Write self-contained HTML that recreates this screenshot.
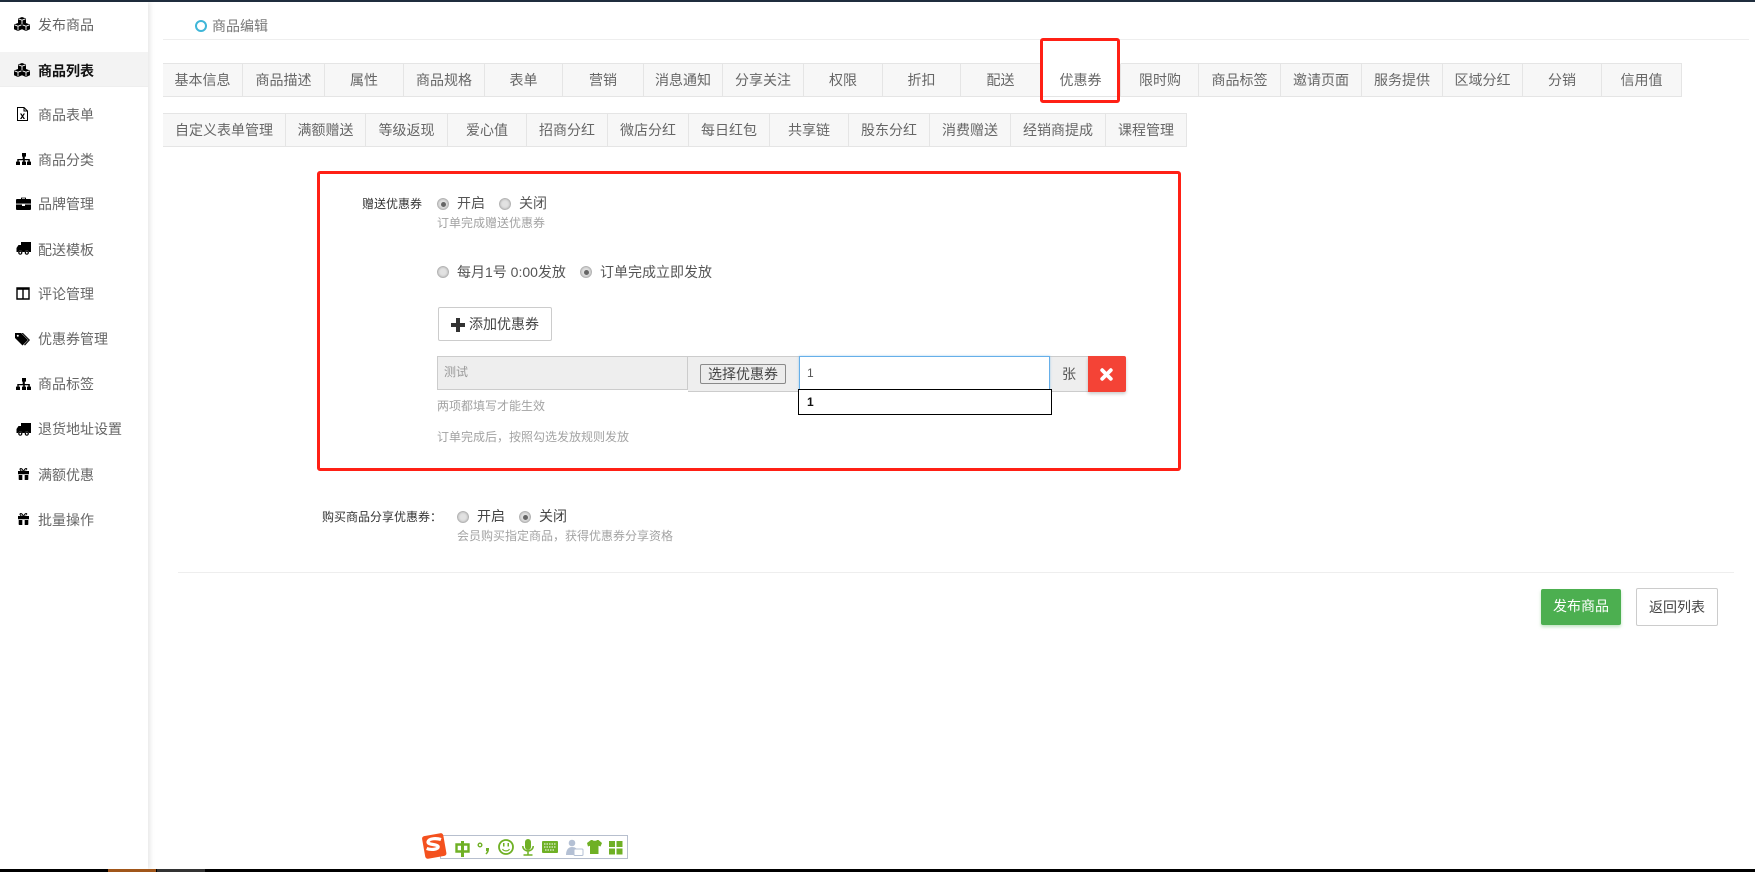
<!DOCTYPE html>
<html lang="zh-CN"><head><meta charset="utf-8"><title>商品编辑</title>
<style>
html,body{margin:0;padding:0;background:#fff;width:1755px;height:872px;overflow:hidden}
body{position:relative;font-family:"Liberation Sans","Noto Sans CJK SC",sans-serif;font-size:14px;color:#555}
.a,.t,.tab{position:absolute;box-sizing:border-box}
.t{white-space:nowrap;line-height:20px;height:20px}
.s{font-size:12px}.g{color:#a3a3a3}.d{color:#333}
.n{left:38px;color:#666}
.tab{height:34px;background:#f7f7f7;border:1px solid #e5e5e5;border-left:0;text-align:center;line-height:33px;color:#666}
.r{position:absolute;width:12px;height:12px;border-radius:50%;background:#e2e2e2;border:1px solid #b5b5b5;box-sizing:border-box;box-shadow:inset 0 0 2px #aaa}
.r.c:after{content:"";position:absolute;left:2.5px;top:2.5px;width:5px;height:5px;border-radius:50%;background:#666}
svg.i{position:absolute;overflow:visible}
</style></head><body>
<svg width="0" height="0" style="position:absolute"><defs>
<g id="cube"><path d="M4 0l4 1.500v4.800L4 8 0 6.300V1.500z" fill="#000"/><path d="M.6 1.900L4 3.200l3.400-1.300M4 3.200v4" stroke="#fff" stroke-width=".9" fill="none"/></g>
<g id="cubes"><use href="#cube" x="4"/><use href="#cube" y="6"/><use href="#cube" x="8" y="6"/></g>
<g id="sitemap"><path d="M5.500 0h4v3.600h-1.200v2.400h5v2.600h1.200V12h-4V8.600h1.300V7.200H8.300v1.400h1.200V12h-4V8.600h1.200V7.200H2.200v1.400h1.300V12h-4V8.600h1.300V6h5.400V3.600H5.500z" transform="translate(.5)" fill="#000"/></g>
<g id="brief"><path d="M5 2V.6h5V2H14a1 1 0 0 1 1 1v3.600H0V3a1 1 0 0 1 1-1zM6 2h3V1.400H6zM0 7.500h6V9h3V7.500h6V12a1 1 0 0 1-1 1H1a1 1 0 0 1-1-1z" fill="#000"/></g>
<g id="truck"><path d="M5 0h10v10h-2.200a2.100 2.100 0 0 0-4 0H6.300a2.100 2.100 0 0 0-4 0H.5V6l2-3H5z" fill="#000"/><circle cx="4.300" cy="10.700" r="1.500" fill="#fff" stroke="#000" stroke-width="1.200"/><circle cx="10.800" cy="10.700" r="1.500" fill="#fff" stroke="#000" stroke-width="1.200"/></g>
<g id="gift"><path d="M3.500 3C1.500 1 3 0 4 0c1 0 2 1.200 2.500 2.500C7 1.200 8 0 9 0c1 0 2.500 1-.5 3H12v3.200H1V3zM4 1.300c-.7 0-.5 1 .6 1.500h1C5.300 2 4.700 1.300 4 1.300zM9 1.300c-.7 0-1.300.7-1.600 1.500h1C9.500 2.300 9.700 1.300 9 1.300zM1.700 7H5.300v5H2.500a.8.8 0 0 1-.8-.8zM7.700 7h3.600v4.200a.8.8 0 0 1-.8.8H7.700z" fill="#000"/></g>
</defs></svg>

<div class="a" style="left:0;top:0;width:1755px;height:2px;background:#1f2d3d"></div>

<div class="a" style="left:0;top:2px;width:148px;height:867px;background:#fff;box-shadow:2px 0 5px rgba(0,0,0,.1)"></div>
<div class="a" style="left:0;top:52px;width:148px;height:35px;background:#f3f3f3;border-bottom:1px solid #eee"></div>

<svg class="i" style="left:14px;top:17px" width="16" height="14"><use href="#cubes"/></svg>
<svg class="i" style="left:14px;top:63px" width="16" height="14"><use href="#cubes"/></svg>
<svg class="i" style="left:17px;top:107px" width="11" height="14"><path d="M.5.500h6.500l3.500 3.500v9.500H.5z" fill="#fff" stroke="#000"/><path d="M7 .5v3.500h3.500" fill="none" stroke="#000"/><path d="M3 6.500h1.500l1 1.700 1-1.700H8L6.200 9.200 8 12H6.500l-1-1.800-1 1.800H3l1.800-2.800z" fill="#000"/></svg>
<svg class="i" style="left:16px;top:153px" width="15" height="12"><use href="#sitemap"/></svg>
<svg class="i" style="left:16px;top:197px" width="15" height="13"><use href="#brief"/></svg>
<svg class="i" style="left:16px;top:242px" width="15" height="13"><use href="#truck"/></svg>
<svg class="i" style="left:16px;top:287px" width="14" height="13"><path d="M1 1h12v11H1zM7 1v11" fill="none" stroke="#000" stroke-width="1.400"/><path d="M1 1h12v1.800H1z" fill="#000"/></svg>
<svg class="i" style="left:15px;top:333px" width="16" height="13"><path d="M0 0h6l7 7-5.500 5.500L0 5z" fill="#000"/><path d="M8 0l7 7-5 5.500-1-.8L13.500 7 6.500 0z" fill="#000"/><circle cx="2.800" cy="2.800" r="1" fill="#fff"/></svg>
<svg class="i" style="left:16px;top:378px" width="15" height="12"><use href="#sitemap"/></svg>
<svg class="i" style="left:16px;top:423px" width="15" height="13"><use href="#truck"/></svg>
<svg class="i" style="left:16.500px;top:468px" width="13" height="12"><use href="#gift"/></svg>
<svg class="i" style="left:16.500px;top:513px" width="13" height="12"><use href="#gift"/></svg>

<span class="t n" style="top:15px">发布商品</span>
<span class="t n" style="top:61px;color:#111;font-weight:700">商品列表</span>
<span class="t n" style="top:105px">商品表单</span>
<span class="t n" style="top:150px">商品分类</span>
<span class="t n" style="top:194px">品牌管理</span>
<span class="t n" style="top:240px">配送模板</span>
<span class="t n" style="top:284px">评论管理</span>
<span class="t n" style="top:329px">优惠券管理</span>
<span class="t n" style="top:374px">商品标签</span>
<span class="t n" style="top:419px">退货地址设置</span>
<span class="t n" style="top:465px">满额优惠</span>
<span class="t n" style="top:510px">批量操作</span>

<div class="a" style="left:195px;top:20px;width:12px;height:12px;border:2px solid #3fb6d8;border-radius:50%"></div>
<span class="t" style="left:212px;top:16px;color:#777">商品编辑</span>
<div class="a" style="left:163px;top:39px;width:1586px;height:1px;background:#eee"></div>

<div class="tab" style="left:163px;top:63px;width:80px">基本信息</div>
<div class="tab" style="left:243px;top:63px;width:82px">商品描述</div>
<div class="tab" style="left:325px;top:63px;width:79px">属性</div>
<div class="tab" style="left:404px;top:63px;width:81px">商品规格</div>
<div class="tab" style="left:485px;top:63px;width:78px">表单</div>
<div class="tab" style="left:563px;top:63px;width:81px">营销</div>
<div class="tab" style="left:644px;top:63px;width:79px">消息通知</div>
<div class="tab" style="left:723px;top:63px;width:81px">分享关注</div>
<div class="tab" style="left:804px;top:63px;width:79px">权限</div>
<div class="tab" style="left:883px;top:63px;width:78px">折扣</div>
<div class="tab" style="left:961px;top:63px;width:80px">配送</div>
<div class="tab" style="left:1041px;top:63px;width:80px;background:#fff;border-top-color:transparent">优惠券</div>
<div class="tab" style="left:1121px;top:63px;width:78px;padding-left:1px">限时购</div>
<div class="tab" style="left:1199px;top:63px;width:82px">商品标签</div>
<div class="tab" style="left:1281px;top:63px;width:81px">邀请页面</div>
<div class="tab" style="left:1362px;top:63px;width:81px">服务提供</div>
<div class="tab" style="left:1443px;top:63px;width:80px">区域分红</div>
<div class="tab" style="left:1523px;top:63px;width:79px">分销</div>
<div class="tab" style="left:1602px;top:63px;width:80px">信用值</div>

<div class="tab" style="left:163px;top:113px;width:123px">自定义表单管理</div>
<div class="tab" style="left:286px;top:113px;width:80px">满额赠送</div>
<div class="tab" style="left:366px;top:113px;width:82px">等级返现</div>
<div class="tab" style="left:448px;top:113px;width:79px">爱心值</div>
<div class="tab" style="left:527px;top:113px;width:81px">招商分红</div>
<div class="tab" style="left:608px;top:113px;width:81px">微店分红</div>
<div class="tab" style="left:689px;top:113px;width:81px">每日红包</div>
<div class="tab" style="left:770px;top:113px;width:79px">共享链</div>
<div class="tab" style="left:849px;top:113px;width:81px">股东分红</div>
<div class="tab" style="left:930px;top:113px;width:81px">消费赠送</div>
<div class="tab" style="left:1011px;top:113px;width:95px">经销商提成</div>
<div class="tab" style="left:1106px;top:113px;width:81px">课程管理</div>

<div class="a" style="left:1040px;top:38px;width:80px;height:65px;border:3px solid #ff2015;border-radius:3px"></div>
<div class="a" style="left:317px;top:171px;width:864px;height:300px;border:3px solid #ff2015;border-radius:3px"></div>

<span class="t s d" style="left:362px;top:194px">赠送优惠券</span>
<i class="r c" style="left:437px;top:198px"></i><span class="t" style="left:457px;top:193px">开启</span>
<i class="r" style="left:499px;top:198px"></i><span class="t" style="left:519px;top:193px">关闭</span>
<span class="t s g" style="left:437px;top:213px">订单完成赠送优惠券</span>

<i class="r" style="left:437px;top:266px"></i><span class="t" style="left:457px;top:262px">每月1号 0:00发放</span>
<i class="r c" style="left:580px;top:266px"></i><span class="t" style="left:600px;top:262px">订单完成立即发放</span>

<div class="a" style="left:438px;top:307px;width:114px;height:34px;border:1px solid #ccc;border-radius:2px;background:#fff"></div>
<svg class="i" style="left:451px;top:318px" width="14" height="14"><path d="M5 0h4v5h5v4H9v5H5V9H0V5h5z" fill="#333"/></svg>
<span class="t" style="left:469px;top:314px;color:#444">添加优惠券</span>

<div class="a" style="left:437px;top:356px;width:251px;height:34px;background:#eee;border:1px solid #ccc"></div>
<span class="t s" style="left:444px;top:362px;color:#999">测试</span>
<div class="a" style="left:688px;top:356px;width:111px;height:36px;background:#eee;border-top:1px solid #ccc;border-bottom:1px solid #ccc"></div>
<div class="a" style="left:700px;top:364px;width:86px;height:20px;background:#ececec;border:1px solid #8a8a8a;border-radius:2px"></div>
<span class="t" style="left:708px;top:364px;color:#444">选择优惠券</span>
<div class="a" style="left:1050px;top:356px;width:38px;height:36px;background:#eee;border-top:1px solid #ccc;border-bottom:1px solid #ccc"></div>
<span class="t" style="left:1062px;top:364px;color:#555">张</span>
<div class="a" style="left:799px;top:356px;width:251px;height:35px;background:#fff;border:1px solid #66afe9;box-shadow:0 0 2px rgba(102,175,233,.6)"></div>
<span class="t" style="left:807px;top:363px;color:#555;font-size:12px">1</span>
<div class="a" style="left:798px;top:389px;width:254px;height:26px;background:#fff;border:1px solid #000"></div>
<span class="t s" style="left:807px;top:392px;color:#111;font-weight:700">1</span>
<div class="a" style="left:1088px;top:356px;width:38px;height:36px;background:#f44336;border-radius:0 2px 2px 0;box-shadow:0 2px 3px rgba(0,0,0,.2)"></div>
<svg class="i" style="left:1100px;top:368px" width="13" height="13"><path d="M2.200 2.200l8.600 8.600M10.800 2.200l-8.600 8.600" stroke="#fff" stroke-width="3.800" stroke-linecap="round"/></svg>

<span class="t s g" style="left:437px;top:396px">两项都填写才能生效</span>
<span class="t s g" style="left:437px;top:427px">订单完成后，按照勾选发放规则发放</span>

<span class="t s d" style="left:322px;top:507px">购买商品分享优惠券：</span>
<i class="r" style="left:457px;top:511px"></i><span class="t" style="left:477px;top:506px;color:#444">开启</span>
<i class="r c" style="left:519px;top:511px"></i><span class="t" style="left:539px;top:506px;color:#444">关闭</span>
<span class="t s g" style="left:457px;top:526px">会员购买指定商品，获得优惠券分享资格</span>

<div class="a" style="left:178px;top:572px;width:1556px;height:1px;background:#eee"></div>

<div class="a" style="left:1541px;top:589px;width:80px;height:36px;background:#4caf50;border-radius:2px;box-shadow:0 2px 3px rgba(76,175,80,.35);color:#fff;text-align:center;line-height:35px">发布商品</div>
<div class="a" style="left:1636px;top:588px;width:82px;height:38px;background:#fff;border:1px solid #ccc;border-radius:2px;color:#444;text-align:center;line-height:36px">返回列表</div>

<div class="a" style="left:0;top:869px;width:1755px;height:3px;background:#000"></div>
<div class="a" style="left:108px;top:869px;width:48px;height:3px;background:#a0561a"></div>
<div class="a" style="left:157px;top:869px;width:48px;height:3px;background:#333"></div>

<svg class="i" style="left:0;top:0" width="1755" height="872" fill="#6fb025">
<rect x="440.500" y="835.500" width="187" height="23" fill="#fff" stroke="#b7bfce"/>
<rect x="423.500" y="834.500" width="21.500" height="23" rx="2.500" fill="#f4511e" transform="rotate(-10 434 846)"/>
<path d="M441 839.500c-3-1-12-2-13 2.500-.6 3 10.500 2 10.200 5-.3 2.800-8 3-11.500 1.500" fill="none" stroke="#fff" stroke-width="3.200"/>
<path d="M456.500 844.500h12v7h-12z" fill="none" stroke="#6fb025" stroke-width="2.400"/><rect x="461" y="841" width="3" height="16"/>
<circle cx="480" cy="845" r="1.800" fill="none" stroke="#6fb025" stroke-width="1.400"/><path d="M486 848h3c.2 3-.8 5.500-2.800 6.500l-.8-1c1-.7 1.300-1.500 1.400-2.500H486z"/>
<circle cx="506" cy="847" r="7" fill="none" stroke="#6fb025" stroke-width="1.800"/><rect x="503" y="843" width="1.500" height="3.500"/><rect x="507.500" y="843" width="1.500" height="3.500"/><path d="M502.500 849c1.500 2.500 5.500 2.500 7 0" fill="none" stroke="#6fb025" stroke-width="1.200"/>
<rect x="525" y="839" width="6" height="11" rx="3"/><path d="M522.800 846c0 6.500 10.400 6.500 10.400 0M528 851v3.500M523.500 855h9" fill="none" stroke="#6fb025" stroke-width="1.500"/>
<rect x="542" y="841" width="16" height="12" rx="1"/><path d="M544 844h12M544 847h12M545 850h10" stroke="#fff" stroke-width="1.100" stroke-dasharray="1.500 1"/>
<circle cx="572" cy="843" r="3.300" fill="#b4c0d4"/><path d="M566 855c0-6 3-8 6-8s5 1.500 5 3l-2 5z" fill="#b4c0d4"/><rect x="574" y="849" width="9" height="6.500" rx="1" fill="#fff" stroke="#b4c0d4"/>
<path d="M587 843l4-3h1.500c.5 1 4 1 4.500 0h1.500l3.500 3-1.500 3.500-2-.8V854h-8.500v-8.300l-2 .8z"/>
<rect x="609" y="841" width="6" height="6"/><rect x="616.500" y="841" width="6" height="6"/><rect x="609" y="848.500" width="6" height="6"/><rect x="616.500" y="848.500" width="6" height="6"/>
</svg>
</body></html>
